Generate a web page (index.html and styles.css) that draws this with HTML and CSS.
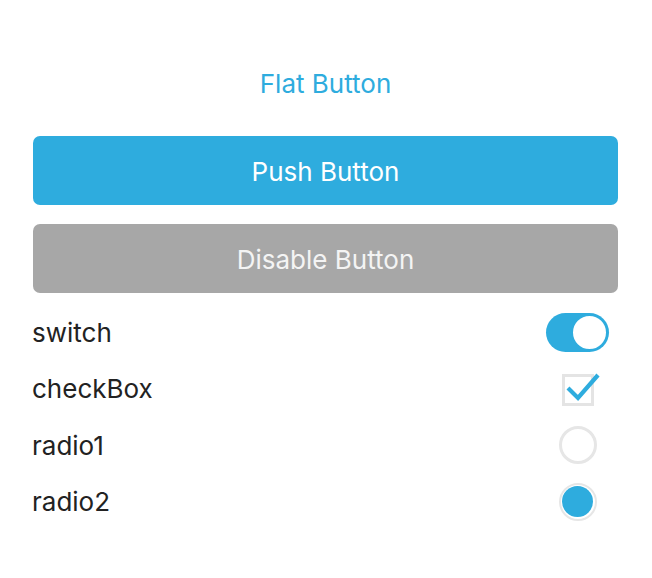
FILE: index.html
```html
<!DOCTYPE html>
<html>
<head>
<meta charset="utf-8">
<link rel="stylesheet" href="styles.css">
</head>
<body>
<div class="page">
  <div class="flat">Flat Button</div>
  <div class="btn push">Push Button</div>
  <div class="btn disabled">Disable Button</div>
  <div class="list">
    <div class="row">
      <span class="label">switch</span>
      <span class="ctrl"><span class="switch"><span class="knob"></span></span></span>
    </div>
    <div class="row">
      <span class="label">checkBox</span>
      <span class="ctrl">
        <span class="check">
          <svg class="tick" width="40" height="40" viewBox="0 0 40 40"><path d="M4 17 L14 27 L34 4" fill="none" stroke="#2eacde" stroke-width="4.2"/></svg>
        </span>
      </span>
    </div>
    <div class="row">
      <span class="label">radio1</span>
      <span class="ctrl"><span class="radio"></span></span>
    </div>
    <div class="row">
      <span class="label">radio2</span>
      <span class="ctrl"><span class="radio on"><span class="dot"></span></span></span>
    </div>
  </div>
</div>
</body>
</html>
```
FILE: styles.css
```css
html, body {
  margin: 0;
  padding: 0;
  background: #ffffff;
}
.page {
  font-family: Inter, "Noto Sans", sans-serif;
  padding: 60px 34px 0 33px;
}
.flat {
  height: 48px;
  line-height: 48px;
  text-align: center;
  color: #2eacde;
  font-size: 26px;
  margin-bottom: 28px;
}
.btn {
  height: 69px;
  line-height: 72px;
  border-radius: 7px;
  text-align: center;
  color: #ffffff;
  font-size: 26px;
  overflow: hidden;
}
.push {
  background: #2eacde;
  margin-bottom: 19px;
}
.disabled {
  background: #a7a7a7;
  color: #f4f4f4;
}
.list {
  margin-top: 11px;
  margin-left: -1px;
  margin-right: 9px;
}
.row {
  height: 56.5px;
  display: flex;
  align-items: center;
  justify-content: space-between;
}
.label {
  font-size: 26px;
  color: #222222;
}
.ctrl {
  width: 63px;
  display: flex;
  justify-content: center;
  align-items: center;
}
.switch {
  width: 63px;
  height: 39px;
  border-radius: 20px;
  background: #2eacde;
  display: flex;
  justify-content: flex-end;
  align-items: center;
  padding-right: 1px;
  box-sizing: border-box;
}
.knob {
  width: 33px;
  height: 33px;
  border-radius: 50%;
  background: #ffffff;
  border: 2px solid #2eacde;
}
.check {
  position: relative;
  width: 32px;
  height: 32px;
  box-sizing: border-box;
  border: 3px solid #e4e4e4;
  margin-top: 2px;
}
.tick {
  position: absolute;
  left: -1px;
  top: -6px;
}
.radio {
  width: 38px;
  height: 38px;
  box-sizing: border-box;
  border-radius: 50%;
  border: 3px solid #e6e6e6;
  display: flex;
  align-items: center;
  justify-content: center;
}
.radio.on {
  border-width: 2px;
}
.dot {
  width: 31px;
  height: 31px;
  border-radius: 50%;
  background: #2eacde;
}
```
